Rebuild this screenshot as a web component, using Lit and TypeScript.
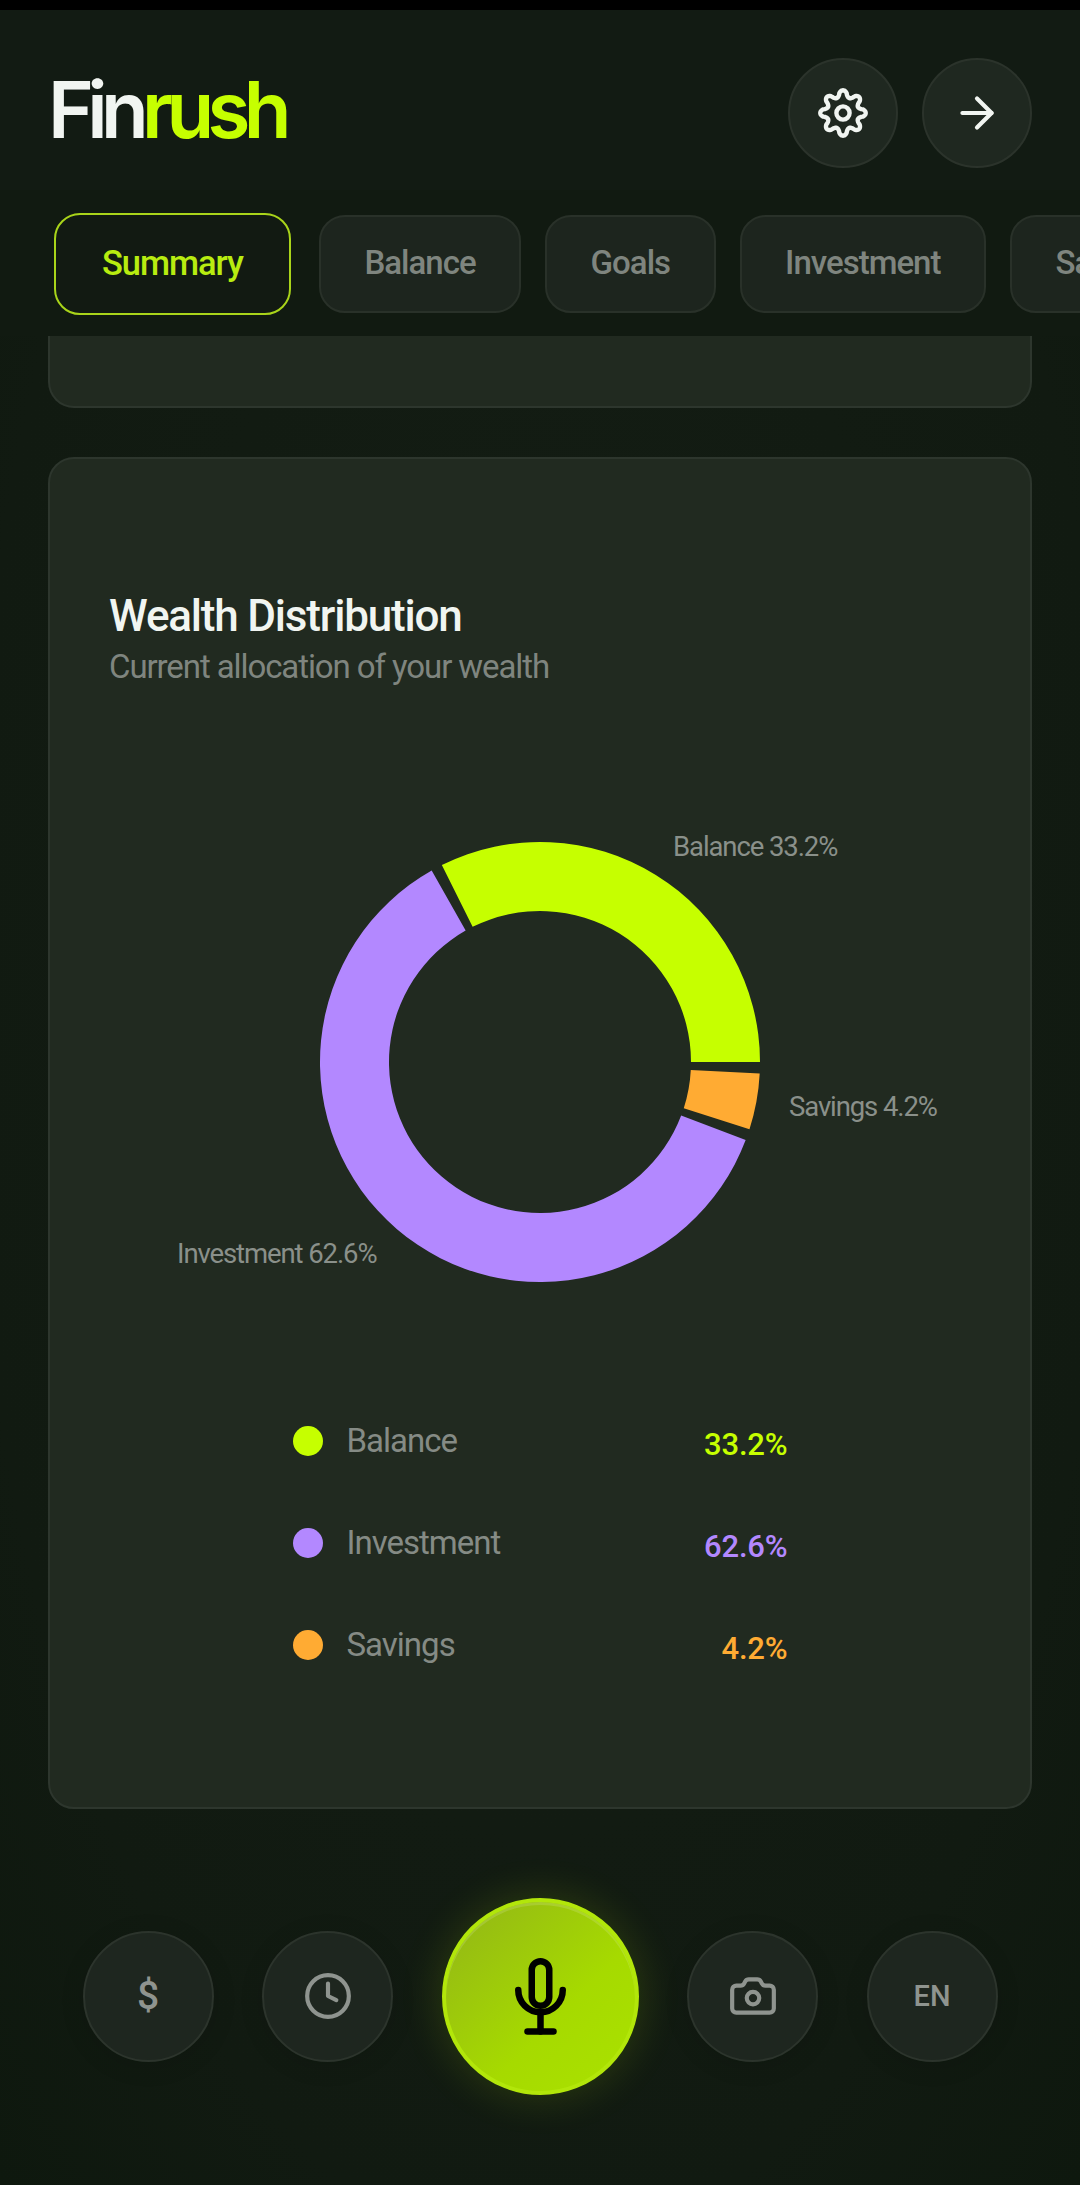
import { LitElement, html, css, svg } from "lit";
import { customElement } from "lit/decorators.js";

const CX = 490;
const CY = 299;
const OUTER = 220;
const INNER = 151;

// going counter clockwise from 3 o'clock, with a 3deg pad after each slice
const slices = [
  { name: "Balance", pct: 33.2, color: "#c6ff00", from: 0, to: 116.5 },
  { name: "Investment", pct: 62.6, color: "#b388ff", from: 119.5, to: 339.2 },
  { name: "Savings", pct: 4.2, color: "#ffab33", from: 342.2, to: 357 },
];

const tabs = ["Summary", "Balance", "Goals", "Investment", "Savings"];

function pt(r: number, deg: number) {
  const a = (deg * Math.PI) / 180;
  return `${(CX + r * Math.cos(a)).toFixed(2)} ${(CY - r * Math.sin(a)).toFixed(2)}`;
}

function sector(from: number, to: number) {
  const large = to - from > 180 ? 1 : 0;
  return `M${pt(OUTER, from)}A${OUTER} ${OUTER} 0 ${large} 0 ${pt(OUTER, to)}L${pt(INNER, to)}A${INNER} ${INNER} 0 ${large} 1 ${pt(INNER, from)}Z`;
}

// 8 lobed cog outline
function cogPath() {
  const pts: string[] = [];
  for (let i = 0; i < 240; i++) {
    const t = (i / 240) * Math.PI * 2;
    const w = Math.cos(8 * t);
    const r = 19.4 + 3.3 * Math.sign(w) * Math.pow(Math.abs(w), 0.7);
    pts.push(`${(25 + r * Math.sin(t)).toFixed(2)} ${(25 - r * Math.cos(t)).toFixed(2)}`);
  }
  return `M${pts.join("L")}Z`;
}

@customElement("app-root")
export class AppRoot extends LitElement {
  static styles = css`
    :host {
      display: flex;
      flex-direction: column;
      height: 2185px;
      overflow: hidden;
      background: radial-gradient(ellipse at 50% 45%, #141d14 0%, #111a11 75%, #0e180e 100%);
      font-family: Roboto, "Noto Sans", sans-serif;
      color: #f1f5f1;
    }
    .status {
      height: 10px;
      background: #000;
      flex: none;
    }
    .top {
      flex: none;
      background: #121b13;
    }
    .head {
      display: flex;
      align-items: center;
      justify-content: space-between;
      height: 180px;
      box-sizing: border-box;
      padding: 48px 48px 22px 48px;
    }
    .logo {
      font-family: Inter, sans-serif;
      font-weight: 600;
      font-size: 78px;
      line-height: 101px;
      padding-bottom: 7px;
      letter-spacing: -0.085em;
      color: #f1f5f1;
    }
    .logo span {
      color: #c6ff00;
    }
    .head-btns {
      display: flex;
      gap: 24px;
    }
    .round {
      box-sizing: border-box;
      display: flex;
      align-items: center;
      justify-content: center;
      border-radius: 50%;
      background: #1f2820;
      border: 2px solid #2b332b;
    }
    .head-btns .round {
      width: 110px;
      height: 110px;
    }
    .tabs {
      box-sizing: border-box;
      display: flex;
      align-items: center;
      gap: 24px;
      height: 146px;
      padding: 2px 0 0 48px;
      overflow: hidden;
      background: #111a11;
    }
    .tab {
      box-sizing: border-box;
      flex: none;
      height: 98px;
      padding: 0 43.5px 3px;
      display: flex;
      align-items: center;
      border-radius: 26px;
      background: #1d251e;
      border: 2px solid #293129;
      color: #7f857f;
      font-size: 33px;
      font-weight: 500;
      letter-spacing: -0.03em;
    }
    .tab.on {
      height: 102px;
      margin: 0 4px 0 6px;
      padding: 0 46px 2px;
      background: #121a12;
      border: 2.5px solid #a9d41a;
      color: #b8ec10;
      font-size: 34.5px;
    }
    main {
      flex: 1;
      min-height: 0;
      padding: 0 48px;
    }
    .card {
      box-sizing: border-box;
      background: #212a20;
      border: 2px solid #2d362d;
      border-radius: 26px;
    }
    .stub {
      height: 72px;
      border-top: 0;
      border-radius: 0 0 26px 26px;
      margin-bottom: 49px;
    }
    .wealth {
      height: 1352px;
      padding-top: 130px;
    }
    .title {
      margin: 0;
      padding-left: 59px;
      font-size: 44px;
      line-height: 55px;
      font-weight: 500;
      letter-spacing: -0.027em;
      color: #f1f5f1;
    }
    .sub {
      margin: 0;
      padding-left: 59px;
      font-size: 33px;
      line-height: 46px;
      letter-spacing: -0.033em;
      color: #7f857f;
    }
    .chart {
      display: block;
      margin-top: 73px;
    }
    .lbl {
      font-size: 27.5px;
      fill: #8a908a;
      letter-spacing: -0.04em;
    }
    .legend {
      width: 495px;
      margin: 63px auto 0;
      display: flex;
      flex-direction: column;
      gap: 72px;
    }
    .row {
      display: flex;
      align-items: center;
      height: 30px;
    }
    .dot {
      width: 30px;
      height: 30px;
      border-radius: 50%;
      margin-right: 24px;
    }
    .name {
      flex: 1;
      font-size: 33px;
      letter-spacing: -0.03em;
      color: #858b85;
      margin-bottom: 2px;
    }
    .val {
      font-size: 31px;
      font-weight: 500;
      letter-spacing: -0.005em;
      margin-top: 6px;
    }
    nav {
      flex: none;
      height: 376px;
      box-sizing: border-box;
      padding-bottom: 2px;
      display: flex;
      align-items: center;
      justify-content: center;
      gap: 48.5px;
    }
    nav .round {
      width: 131px;
      height: 131px;
      background: #1e261f;
      border-color: #2c342c;
      color: #8f948f;
      box-shadow: 0 4px 24px rgba(0, 0, 0, 0.12);
    }
    .glyph {
      font-size: 39px;
      font-weight: 500;
    }
    .en {
      font-size: 29px;
      font-weight: 500;
    }
    .mic {
      box-sizing: border-box;
      width: 197px;
      height: 197px;
      display: flex;
      align-items: center;
      justify-content: center;
      border-radius: 50%;
      background: linear-gradient(135deg, #92b518 0%, #a6da00 60%, #aae200 100%);
      border: 4px solid #b2e60a;
      box-shadow: 0 0 44px rgba(198, 255, 0, 0.16), inset 0 3px 0 rgba(255, 255, 255, 0.14);
    }
  `;

  render() {
    return html`
      <div class="status"></div>
      <div class="top">
        <header class="head">
          <div class="logo">Fin<span>rush</span></div>
          <div class="head-btns">
            <div class="round">
              <svg width="50" height="50" viewBox="0 0 50 50" fill="none" stroke="#f1f5f1" stroke-width="4.4" stroke-linejoin="round">
                <path d=${cogPath()} />
                <circle cx="25" cy="25" r="6.6" />
              </svg>
            </div>
            <div class="round">
              <svg width="50" height="50" viewBox="0 0 24 24" fill="none" stroke="#f1f5f1" stroke-width="2" stroke-linecap="round" stroke-linejoin="round">
                <path d="M5 12h14" />
                <path d="m12 5 7 7-7 7" />
              </svg>
            </div>
          </div>
        </header>
        <div class="tabs">
          ${tabs.map((t, i) => html`<div class="tab ${i === 0 ? "on" : ""}">${t}</div>`)}
        </div>
      </div>
      <main>
        <div class="card stub"></div>
        <section class="card wealth">
          <h2 class="title">Wealth Distribution</h2>
          <p class="sub">Current allocation of your wealth</p>
          <svg class="chart" width="979" height="600" viewBox="0 0 979 600">
            ${slices.map((s) => svg`<path d=${sector(s.from, s.to)} fill=${s.color} />`)}
            <text class="lbl" x="623" y="93">Balance 33.2%</text>
            <text class="lbl" x="739" y="353">Savings 4.2%</text>
            <text class="lbl" x="127" y="500">Investment 62.6%</text>
          </svg>
          <div class="legend">
            ${slices.map(
              (s) => html`
                <div class="row">
                  <span class="dot" style="background:${s.color}"></span>
                  <span class="name">${s.name}</span>
                  <span class="val" style="color:${s.color}">${s.pct}%</span>
                </div>
              `
            )}
          </div>
        </section>
      </main>
      <nav>
        <div class="round"><span class="glyph">$</span></div>
        <div class="round">
          <svg width="50" height="50" viewBox="0 0 24 24" fill="none" stroke="currentColor" stroke-width="2" stroke-linecap="round" stroke-linejoin="round">
            <circle cx="12" cy="12" r="10" />
            <path d="M12 6v6l4 2" />
          </svg>
        </div>
        <div class="mic">
          <svg width="51" height="77" viewBox="0 0 51 77" fill="none" stroke="#000" stroke-width="6.5" stroke-linecap="round">
            <rect x="16.75" y="3.25" width="17.5" height="44.5" rx="8.75" />
            <path d="M3.25 32a22.25 22.25 0 0 0 44.5 0" />
            <path d="M25.5 54.25V73.5" />
            <path d="M12.5 73.5h26" />
          </svg>
        </div>
        <div class="round">
          <svg width="50" height="50" viewBox="0 0 24 24" fill="none" stroke="currentColor" stroke-width="2" stroke-linecap="round" stroke-linejoin="round">
            <path d="M13.997 4a2 2 0 0 1 1.76 1.05l.486.9A2 2 0 0 0 18.003 7H20a2 2 0 0 1 2 2v9a2 2 0 0 1-2 2H4a2 2 0 0 1-2-2V9a2 2 0 0 1 2-2h1.997a2 2 0 0 0 1.759-1.048l.489-.904A2 2 0 0 1 10.004 4z" />
            <circle cx="12" cy="13" r="3" />
          </svg>
        </div>
        <div class="round"><span class="en">EN</span></div>
      </nav>
    `;
  }
}
